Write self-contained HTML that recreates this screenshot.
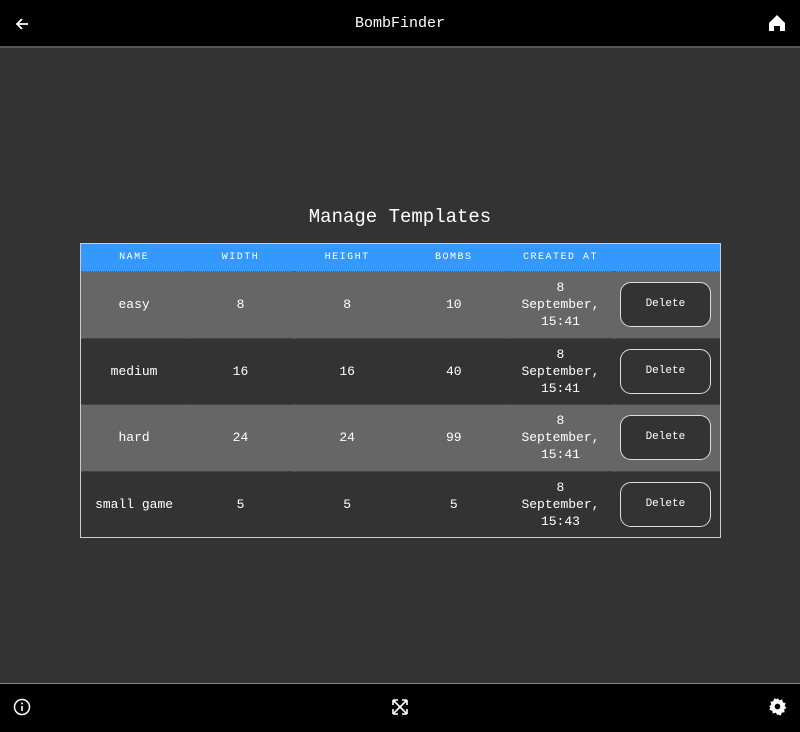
<!DOCTYPE html>
<html><head><style>
body{margin:0;width:800px;height:731px;background:#333;font-family:"Liberation Mono",monospace;color:#fff;position:relative;overflow:hidden}
.top{position:absolute;left:0;top:0;width:800px;height:46px;background:#000;border-bottom:2px solid #555}
.bot{position:absolute;left:0;top:683px;width:800px;height:48px;background:#000;border-top:1px solid #888}
.title{position:absolute;top:15px;width:800px;text-align:center;font-size:15px}
h1{position:absolute;top:206px;width:800px;text-align:center;margin:0;font-weight:normal;font-size:19px}
table{position:absolute;left:80px;top:243px;width:641px;border-collapse:collapse;border:1px solid #ccc;table-layout:fixed}
th{background:#3399ff;height:27px;font-size:10px;font-weight:normal;letter-spacing:1.5px;padding:0}
td{text-align:center;font-size:13px;height:65.5px;padding:0;line-height:17px}
tr.g td{background:#666}
tr.d td{background:#333}
tr+tr td{border-top:1px dotted #555}
.btn{display:inline-block;width:91px;height:45px;border:1px solid #ddd;border-radius:11px;background:#333;font-size:11px;line-height:43px;box-sizing:border-box;margin-left:-3px}
svg{position:absolute}
</style></head><body>
<div class="top"><div class="title">BombFinder</div>
<svg style="left:14px;top:16px" width="16" height="16" viewBox="0 0 16 16"><path d="M14 8H3M8 3L3 8l5 5" stroke="#fff" stroke-width="1.8" fill="none"/></svg>
<svg style="left:768px;top:14px" width="18" height="18" viewBox="0 0 18 18"><path d="M1 9L9 1l8 8v8h-5v-5H6v5H1z" fill="#fff"/></svg>
</div>
<h1>Manage Templates</h1>
<table>
<tr><th>NAME</th><th>WIDTH</th><th>HEIGHT</th><th>BOMBS</th><th>CREATED AT</th><th></th></tr>
<tr class="g"><td>easy</td><td>8</td><td>8</td><td>10</td><td>8<br>September,<br>15:41</td><td><span class="btn">Delete</span></td></tr>
<tr class="d"><td>medium</td><td>16</td><td>16</td><td>40</td><td>8<br>September,<br>15:41</td><td><span class="btn">Delete</span></td></tr>
<tr class="g"><td>hard</td><td>24</td><td>24</td><td>99</td><td>8<br>September,<br>15:41</td><td><span class="btn">Delete</span></td></tr>
<tr class="d"><td>small game</td><td>5</td><td>5</td><td>5</td><td>8<br>September,<br>15:43</td><td><span class="btn">Delete</span></td></tr>
</table>
<div class="bot">
<svg style="left:13px;top:14px" width="18" height="18" viewBox="0 0 18 18"><circle cx="9" cy="9" r="7.5" stroke="#fff" stroke-width="1.5" fill="none"/><path d="M9 8v5" stroke="#fff" stroke-width="1.6"/><circle cx="9" cy="5.5" r="1" fill="#fff"/></svg>
<svg style="left:391px;top:14px" width="18" height="18" viewBox="0 0 18 18"><path d="M2 2l14 14M16 2L2 16M2 2h5M2 2v5M16 2h-5M16 2v5M2 16h5M2 16v-5M16 16h-5M16 16v-5" stroke="#fff" stroke-width="1.6" fill="none"/></svg>
<svg style="left:768px;top:13px" width="19" height="19" viewBox="0 0 20 20"><path d="M10 1l2 2.5 3-1 .5 3 3 1-1 3 2 2-2.5 1.5.5 3-3 .5-1 3-3-1L10 19l-2-2.5-3 1-.5-3-3-1 1-3L1 10l2.5-2-1-3 3-.5 1-3 3 1z" fill="#fff"/><circle cx="10" cy="10" r="3" fill="#000"/></svg>
</div>
</body></html>
